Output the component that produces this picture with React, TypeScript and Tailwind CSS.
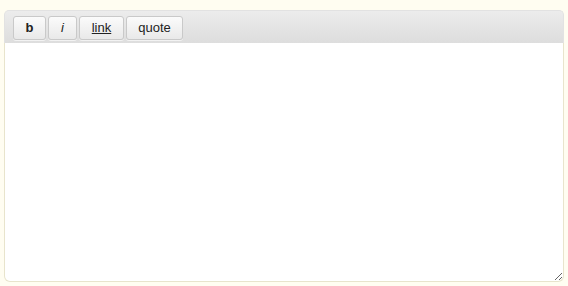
import React from 'react';

const btn =
  'h-[24px] rounded-[3px] border border-[#c9c9c9] bg-gradient-to-b from-[#fbfbfb] to-[#e9e9e9] text-[13px] text-[#222] flex items-center justify-center shadow-[0_1px_0_rgba(255,255,255,0.6)]';

export default function App() {
  return (
    <div className="w-[568px] h-[286px] bg-[#fffdf1] pt-[10px] px-[4px] pb-[4px] font-['Liberation_Sans',Arial,sans-serif]">
      <div className="flex flex-col h-[272px] w-[560px]">
        {/* toolbar */}
        <div className="h-[33px] rounded-t-[5px] bg-gradient-to-b from-[#ececec] to-[#dddddd] border border-b-0 border-[#e2e2e2] flex items-center gap-[2px] pl-[8px] pt-[1px]">
          <button className={`${btn} w-[33px] font-bold`}>b</button>
          <button className={`${btn} w-[29px] italic`}>i</button>
          <button className={`${btn} w-[45px] underline`}>link</button>
          <button className={`${btn} w-[57px]`}>quote</button>
        </div>
        {/* text area */}
        <textarea className="flex-1 w-full bg-white border border-t-0 border-[#e8e4cc] rounded-b-[6px] outline-none resize-y p-2 text-[13px]" />
      </div>
    </div>
  );
}
